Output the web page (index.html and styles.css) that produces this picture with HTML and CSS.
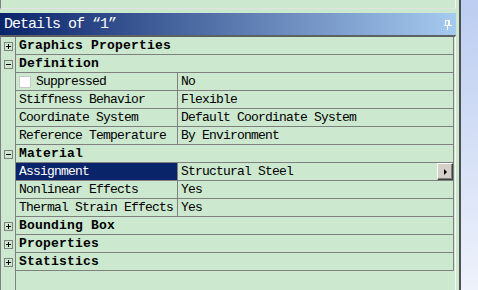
FILE: index.html
```html
<!DOCTYPE html>
<html lang="en">
  <head>
    <meta charset="UTF-8" />
    <meta name="viewport" content="width=device-width, initial-scale=1.0" />
    <title>Details of "1"</title>
    <link rel="stylesheet" href="styles.css">
  </head>
  <body>
    <div class="window">
      <div class="panel">
        <div class="prev"></div>
        <div class="titlebar">
          <span>Details of “1”</span>
          <svg class="pin" width="8" height="10" viewBox="0 0 8 10">
            <rect x="1" y="0" width="5" height="1" fill="#fff" />
            <rect x="1" y="0" width="1" height="5" fill="#fff" />
            <rect x="4" y="0" width="2" height="5" fill="#fff" />
            <rect x="0" y="5" width="8" height="1" fill="#fff" />
            <rect x="3" y="6" width="1" height="4" fill="#fff" />
          </svg>
        </div>
        <div class="tree">
          <div class="row">
            <span class="exp plus"></span>
            <div class="cell cat">Graphics Properties</div>
          </div>
          <div class="row">
            <span class="exp minus"></span>
            <div class="cell cat">Definition</div>
          </div>
          <div class="row">
            <span></span>
            <div class="cell prop">
              <div class="name"><span class="check"></span>Suppressed</div>
              <div class="value">No</div>
            </div>
          </div>
          <div class="row">
            <span></span>
            <div class="cell prop">
              <div class="name">Stiffness Behavior</div>
              <div class="value">Flexible</div>
            </div>
          </div>
          <div class="row">
            <span></span>
            <div class="cell prop">
              <div class="name">Coordinate System</div>
              <div class="value">Default Coordinate System</div>
            </div>
          </div>
          <div class="row">
            <span></span>
            <div class="cell prop">
              <div class="name">Reference Temperature</div>
              <div class="value">By Environment</div>
            </div>
          </div>
          <div class="row">
            <span class="exp minus"></span>
            <div class="cell cat">Material</div>
          </div>
          <div class="row">
            <span></span>
            <div class="cell prop">
              <div class="name valgt">Assignment</div>
              <div class="value">Structural Steel<span class="drop"><i></i></span></div>
            </div>
          </div>
          <div class="row">
            <span></span>
            <div class="cell prop">
              <div class="name">Nonlinear Effects</div>
              <div class="value">Yes</div>
            </div>
          </div>
          <div class="row">
            <span></span>
            <div class="cell prop">
              <div class="name">Thermal Strain Effects</div>
              <div class="value">Yes</div>
            </div>
          </div>
          <div class="row">
            <span class="exp plus"></span>
            <div class="cell cat">Bounding Box</div>
          </div>
          <div class="row">
            <span class="exp plus"></span>
            <div class="cell cat">Properties</div>
          </div>
          <div class="row">
            <span class="exp plus"></span>
            <div class="cell cat">Statistics</div>
          </div>
          <div class="rest"></div>
        </div>
      </div>
      <div class="split"></div>
      <div class="side"></div>
    </div>
  </body>
</html>
```

FILE: styles.css
```css
* {
  margin: 0px;
  box-sizing: border-box;
}

body {
  height: 290px;
  overflow: hidden;
  background-color: #cce8cf;
  color: #000;
  font-family: "Liberation Mono", "DejaVu Sans Mono", monospace;
  font-size: 13px;
  letter-spacing: -0.8px;
}

.window {
  display: flex;
  height: 290px;
}

.panel {
  width: 456px;
  display: flex;
  flex-direction: column;
}

.prev {
  height: 9px;
  margin-bottom: 4px;
  border-left: 1px solid #808080;
  border-right: 1px solid #f4f4f4;
  border-bottom: 1px solid #e2e2e2;
}

.titlebar {
  height: 22px;
  padding: 1px 4px 0px 4px;
  display: flex;
  align-items: center;
  justify-content: space-between;
  background: linear-gradient(to right, #0a246a, #a6caf0);
  color: white;
  font-size: 15px;
  letter-spacing: -1px;
}

.tree {
  flex: 1;
  display: flex;
  flex-direction: column;
  padding-right: 1px;
  border-top: 2px solid #606060;
  border-left: 1px solid #808080;
  border-right: 1px solid #f8f8f8;
}

.row {
  display: grid;
  grid-template-columns: 14px 1fr;
  height: 18px;
}

.cell {
  line-height: 17px;
  border-left: 1px solid #808080;
  border-right: 1px solid #808080;
  border-bottom: 1px solid #808080;
  white-space: nowrap;
}

.cat {
  padding-left: 3px;
  font-weight: bold;
  letter-spacing: 0.2px;
}

.prop {
  display: flex;
}

.name {
  width: 162px;
  padding-left: 3px;
  display: flex;
  align-items: center;
  border-right: 1px solid #808080;
}

.value {
  flex: 1;
  padding-left: 3px;
  display: flex;
  align-items: center;
  justify-content: space-between;
}

.valgt {
  background-color: #0a246a;
  color: white;
}

.check {
  width: 12px;
  height: 12px;
  margin-right: 5px;
  background-color: white;
  border: 1px solid #c8c8c8;
}

.drop {
  width: 16px;
  height: 17px;
  display: flex;
  align-items: center;
  justify-content: center;
  background-color: #d4d0c8;
  border-top: 1px solid #fff;
  border-left: 1px solid #fff;
  border-right: 1px solid #404040;
  border-bottom: 1px solid #404040;
  box-shadow: inset -1px -1px 0px #808080;
}

.drop i {
  width: 0px;
  height: 0px;
  margin-left: 1px;
  border-left: 3px solid #000;
  border-top: 3px solid transparent;
  border-bottom: 3px solid transparent;
}

.exp {
  width: 9px;
  height: 9px;
  margin-left: 3px;
  align-self: center;
  border: 1px solid #808080;
}

.plus {
  background: linear-gradient(#000, #000) center / 5px 1px no-repeat,
    linear-gradient(#000, #000) center / 1px 5px no-repeat;
}

.minus {
  background: linear-gradient(#000, #000) center / 5px 1px no-repeat;
}

.rest {
  flex: 1;
  margin-left: 14px;
  border-left: 1px solid #808080;
}

.split {
  width: 2px;
  margin-left: 3px;
  background-color: #505050;
}

.side {
  flex: 1;
  background: linear-gradient(#bccdf1, #eef2fb);
}
```
